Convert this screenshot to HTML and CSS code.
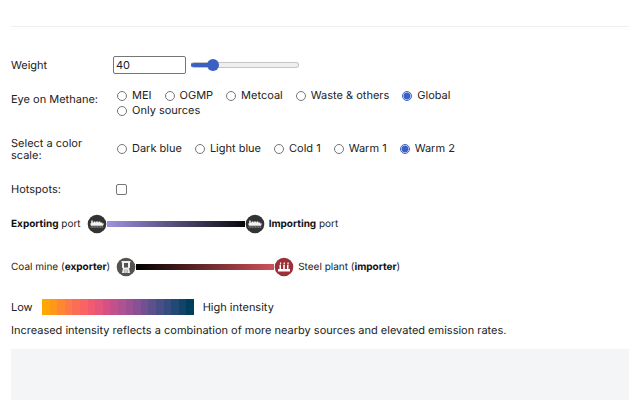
FILE: index.html
```html
<!DOCTYPE html>
<html lang="en">
<head>
    <meta charset="UTF-8">
    <meta name="viewport" content="width=device-width, initial-scale=1.0">
    <title>Eye on Methane</title>
    <link rel="stylesheet" href="styles.css">
</head>
<body>
    <hr class="divider">

    <form class="controls">
        <div class="row row-weight">
            <label class="row-label" for="weight">Weight</label>
            <input type="number" class="number-input" id="weight" value="40" min="0" max="250">
            <input type="range" class="range-input" id="weightRange" aria-label="Weight" value="40" min="0" max="250">
        </div>

        <fieldset class="row row-methane" aria-labelledby="methaneLabel">
            <span class="row-label" id="methaneLabel">Eye on Methane:</span>
            <div class="options">
                <label class="option"><input type="radio" name="methane"><span>MEI</span></label>
                <label class="option"><input type="radio" name="methane"><span>OGMP</span></label>
                <label class="option"><input type="radio" name="methane"><span>Metcoal</span></label>
                <label class="option"><input type="radio" name="methane"><span>Waste &amp; others</span></label>
                <label class="option"><input type="radio" name="methane" checked><span>Global</span></label>
                <label class="option"><input type="radio" name="methane"><span>Only sources</span></label>
            </div>
        </fieldset>

        <fieldset class="row row-scale" aria-labelledby="scaleLabel">
            <span class="row-label" id="scaleLabel">Select a color scale:</span>
            <div class="options">
                <label class="option"><input type="radio" name="scale"><span>Dark blue</span></label>
                <label class="option"><input type="radio" name="scale"><span>Light blue</span></label>
                <label class="option"><input type="radio" name="scale"><span>Cold 1</span></label>
                <label class="option"><input type="radio" name="scale"><span>Warm 1</span></label>
                <label class="option"><input type="radio" name="scale" checked><span>Warm 2</span></label>
            </div>
        </fieldset>

        <div class="row row-hotspots">
            <label class="row-label" for="hotspots">Hotspots:</label>
            <input type="checkbox" class="check-input" id="hotspots">
        </div>
    </form>

    <!-- Trade routes -->
    <div class="route">
        <span><b>Exporting</b> port</span>
        <svg class="icon" viewBox="0 0 20 20" aria-hidden="true">
            <circle cx="10" cy="10" r="9.3" fill="#333"/>
            <path fill="#f4f4f4" d="M3 9.500h1.200V6.500h1.500V8.500h1V7.500h1.800v1h.6v-1h1.800v1h.6v-1h1.800v1h2v1H17l-1 2.300H4z"/>
            <path d="M3.500 13h13" stroke="#aaa" stroke-width="1.200" stroke-dasharray="1.200 .4"/>
        </svg>
        <span class="line line-port"></span>
        <svg class="icon" viewBox="0 0 20 20" aria-hidden="true">
            <circle cx="10" cy="10" r="9.3" fill="#333"/>
            <path fill="#f4f4f4" d="M3 9.500h1.200V6.500h1.500V8.500h1V7.500h1.800v1h.6v-1h1.800v1h.6v-1h1.800v1h2v1H17l-1 2.300H4z"/>
            <path d="M3.500 13h13" stroke="#aaa" stroke-width="1.200" stroke-dasharray="1.200 .4"/>
        </svg>
        <span><b>Importing</b> port</span>
    </div>

    <div class="route">
        <span>Coal mine (<b>exporter</b>)</span>
        <svg class="icon" viewBox="0 0 20 20" aria-hidden="true">
            <circle cx="10" cy="10" r="9.3" fill="#55524f"/>
            <path fill="#eee" fill-rule="evenodd" d="M5.500 4h9v1.500H14V11h-1l1 5h-2.500v-3h-3v3H6l1-5H6V5.500h-.5zM8 6v4.500h4V6z"/>
            <path fill="#ccc" d="M8.500 12h3v4h-3z"/>
        </svg>
        <span class="line line-coal"></span>
        <svg class="icon" viewBox="0 0 20 20" aria-hidden="true">
            <circle cx="10" cy="10" r="9.3" fill="#9b3038"/>
            <path fill="#fff" d="M4 14.500v-2.500h1.500V8H7v4h2.200V8h1.600v4H13V8h1.500v4H16v2.500z"/>
            <path d="M6.300 7.500l.5-2M10 7.500l.5-2M13.800 7.500l.5-2" stroke="#fff" stroke-width="1.200"/>
        </svg>
        <span>Steel plant (<b>importer</b>)</span>
    </div>

    <!-- Intensity scale -->
    <div class="legend">
        <span>Low</span>
        <span class="legend-bar"></span>
        <span>High intensity</span>
    </div>
    <p class="note">Increased intensity reflects a combination of more nearby sources and elevated emission rates.</p>

    <div class="panel"></div>
</body>
</html>
```
FILE: styles.css
```css
* {
    box-sizing: border-box;
}
body {
    display: flex;
    flex-direction: column;
    min-height: 100vh;
    margin: 0;
    padding: 26px 11px 0;
    font-family: Inter, "Liberation Sans", sans-serif;
    font-size: 11px;
    line-height: 12px;
    color: #222;
    background-color: #fff;
    text-rendering: geometricPrecision;
}
.divider {
    width: 100%;
    margin: 0;
    border: 0;
    border-top: 1px solid #eee;
}
.controls {
    padding-top: 28px;
}
.row {
    display: flex;
    align-items: center;
    min-width: 0;
    margin: 0;
    padding: 0;
    border: 0;
}
.row-label {
    width: 90px;
    margin-right: 12px;
    flex-shrink: 0;
}
.row-weight {
    height: 20px;
}
.row-methane {
    align-items: flex-start;
    margin-top: 13px;
}
.row-methane .row-label {
    padding-top: 5px;
}
.row-scale {
    margin-top: 19px;
}
.row-scale .options {
    padding-bottom: 2px;
}
.row-hotspots {
    margin-top: 20px;
    height: 16px;
}
.number-input {
    width: 73px;
    height: 18px;
    padding: 0 2px;
    border: 1px solid #767676;
    border-radius: 2px;
    font: inherit;
    color: inherit;
    background-color: #fff;
    appearance: textfield;
}
.number-input::-webkit-inner-spin-button {
    appearance: none;
}
.range-input {
    width: 108px;
    height: 12px;
    margin: 0 0 0 5px;
    background: transparent;
    appearance: none;
}
.range-input::-webkit-slider-runnable-track {
    height: 6px;
    border: 1px solid #c4c4c4;
    border-radius: 3px;
    background: linear-gradient(to right, #3b60c4 20px, #efefef 20px);
    background-origin: border-box;
    border-left-color: #3b60c4;
}
.range-input::-webkit-slider-thumb {
    width: 12px;
    height: 12px;
    margin-top: -4px;
    border-radius: 50%;
    background-color: #3b60c4;
    appearance: none;
}
.options {
    display: flex;
    flex-wrap: wrap;
    column-gap: 13px;
    max-width: 360px;
    padding-left: 4px;
}
.option {
    display: flex;
    gap: 5px;
    height: 15px;
    line-height: 14px;
    white-space: nowrap;
}
.option input {
    width: 10px;
    height: 10px;
    margin: 3px 0 0;
    border: 1px solid #767676;
    border-radius: 50%;
    background-color: #fff;
    appearance: none;
}
.option input:checked {
    border-color: #3b60c4;
    background: radial-gradient(circle, #3b60c4 3px, #fff 4px);
}
.check-input {
    width: 11px;
    height: 11px;
    margin: 0 0 0 3px;
    border: 1px solid #767676;
    border-radius: 2px;
    background-color: #fff;
    appearance: none;
}
.check-input:checked {
    background-color: #3b60c4;
}
.route {
    display: flex;
    align-items: center;
    height: 20px;
    margin-top: 17px;
    font-size: 10px;
}
.route + .route {
    margin-top: 23px;
}
.route b {
    font-weight: 700;
    color: #111;
}
.icon {
    width: 20px;
    height: 20px;
    margin: 0 4px 0 6px;
}
.line {
    width: 138px;
    height: 6px;
    margin: 0 -6px 0 -4px;
}
.line-port {
    background: linear-gradient(to right, #9c92e0, #08080c);
}
.line-coal {
    background: linear-gradient(to right, #000, #cf5158);
}
.legend {
    display: flex;
    align-items: center;
    gap: 9px;
    margin-top: 22px;
}
.legend-bar {
    width: 152px;
    height: 16px;
    background: linear-gradient(to right,
        #ffa600 5%, #ff9719 5% 10%, #ff8731 10% 15%, #fe7947 15% 20%,
        #fc6d55 20% 25%, #fa6264 25% 30%, #f15a70 30% 35%, #e4567b 35% 40%,
        #d65086 40% 45%, #c4508b 45% 50%, #b05191 50% 55%, #9d5195 55% 60%,
        #885193 60% 65%, #725192 65% 70%, #5d508e 70% 75%, #494e86 75% 80%,
        #354c7e 80% 85%, #234873 85% 90%, #124368 90% 95%, #003f5c 95%);
}
.note {
    margin: 9px 0 0;
}
.panel {
    flex: 1;
    margin-top: 13px;
    background-color: #f4f5f7;
}
```
